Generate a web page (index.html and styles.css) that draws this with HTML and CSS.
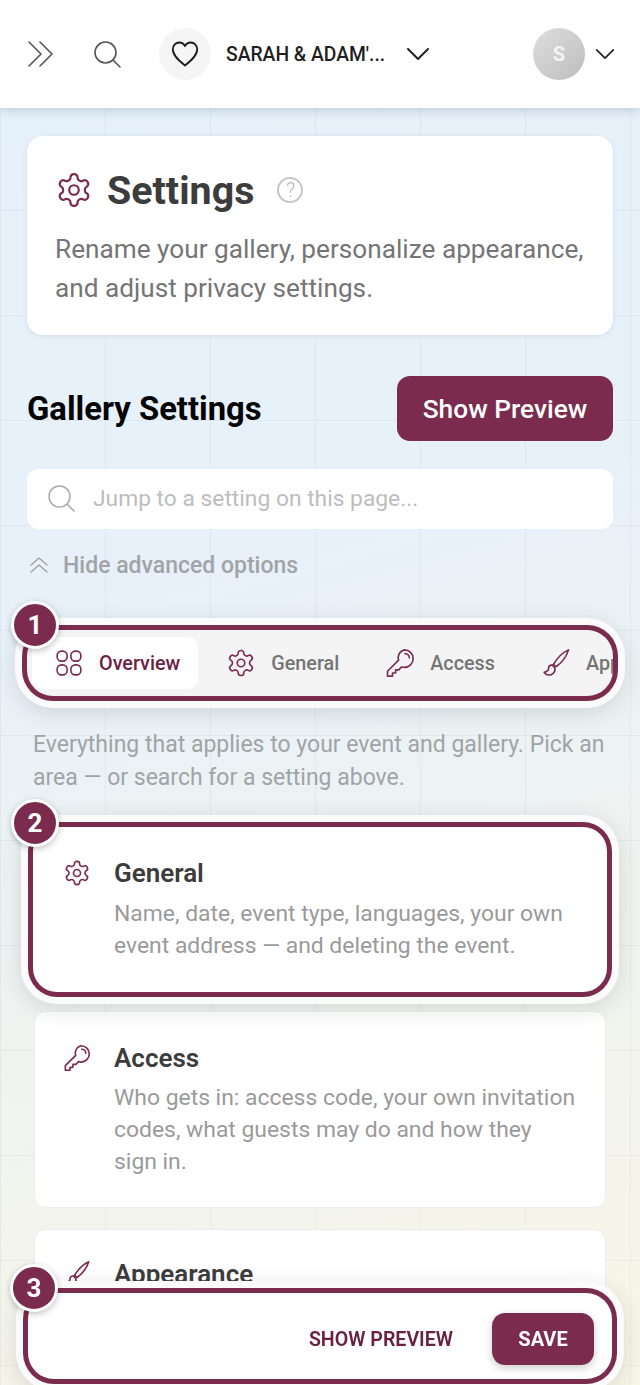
FILE: index.html
```html
<!DOCTYPE html>
<html lang="en">
<head>
<meta charset="UTF-8">
<meta name="viewport" content="width=device-width, initial-scale=1.0">
<title>Gallery Settings</title>
<link rel="stylesheet" href="styles.css">
</head>
<body>
<svg class="icon-defs" width="0" height="0">
  <defs>
    <symbol id="i-gear" viewBox="0 0 24 24">
      <path d="M12.22 2h-.44a2 2 0 0 0-2 2v.18a2 2 0 0 1-1 1.73l-.43.25a2 2 0 0 1-2 0l-.15-.08a2 2 0 0 0-2.73.73l-.22.38a2 2 0 0 0 .73 2.73l.15.1a2 2 0 0 1 1 1.72v.51a2 2 0 0 1-1 1.74l-.15.09a2 2 0 0 0-.73 2.73l.22.38a2 2 0 0 0 2.73.73l.15-.08a2 2 0 0 1 2 0l.43.25a2 2 0 0 1 1 1.73V20a2 2 0 0 0 2 2h.44a2 2 0 0 0 2-2v-.18a2 2 0 0 1 1-1.73l.43-.25a2 2 0 0 1 2 0l.15.08a2 2 0 0 0 2.73-.73l.22-.39a2 2 0 0 0-.73-2.73l-.15-.08a2 2 0 0 1-1-1.74v-.5a2 2 0 0 1 1-1.74l.15-.09a2 2 0 0 0 .73-2.73l-.22-.38a2 2 0 0 0-2.73-.73l-.15.08a2 2 0 0 1-2 0l-.43-.25a2 2 0 0 1-1-1.73V4a2 2 0 0 0-2-2z"/>
      <circle cx="12" cy="12" r="3"/>
    </symbol>
    <symbol id="i-key" viewBox="0 0 24 24">
      <path d="M15.5 1.500a7 7 0 0 1 0 14c-.8 0-1.500-.1-2.200-.4L11 17.500H8.500V20H6v2.500H2V18.600l8.900-8.900c-.3-.7-.4-1.400-.4-2.200a7 7 0 0 1 5-6z"/>
      <path d="M16 4.500a3.500 3.500 0 0 1 3.500 3.500"/>
    </symbol>
    <symbol id="i-brush" viewBox="0 0 24 24">
      <path d="M22 1.500c-4.500 2-9 6.500-12 11.500l2 2c5-3.500 8.500-8.500 10-13.500z"/>
      <path d="M9 13.500c-2 .2-3 1.500-3 3 0 1.200-1 2.200-3.500 3 1.500 2.500 5 2.700 7 1 1.300-1.100 2-2.700 1.500-4.500z"/>
    </symbol>
    <symbol id="i-grid" viewBox="0 0 24 24">
      <rect x="2.500" y="2.500" width="8" height="8" rx="3.500"/>
      <rect x="13.500" y="2.500" width="8" height="8" rx="3.500"/>
      <rect x="2.500" y="13.500" width="8" height="8" rx="3.500"/>
      <rect x="13.500" y="13.500" width="8" height="8" rx="3.500"/>
    </symbol>
    <symbol id="i-search" viewBox="0 0 28 28">
      <circle cx="12.500" cy="12.500" r="10.500"/>
      <path d="M20.500 20.500l6.500 6.500"/>
    </symbol>
    <symbol id="i-chevron" viewBox="0 0 24 14">
      <path d="M2 2l10 10L22 2"/>
    </symbol>
  </defs>
</svg>

<div class="topbar">
  <svg class="top-icon expand-icon" viewBox="0 0 26 26"><path d="M1 1l12 12L1 25"/><path d="M12 1l12 12-12 12"/></svg>
  <svg class="top-icon search-icon"><use href="#i-search"/></svg>
  <div class="event-logo">
    <svg class="heart-icon" viewBox="0 0 28 26"><path d="M14 24.500C9 20.500 1.800 15 1.800 8.300 1.800 4.400 4.800 1.500 8.300 1.500c2.400 0 4.500 1.200 5.700 3.500 1.200-2.300 3.300-3.500 5.700-3.500 3.500 0 6.500 2.900 6.500 6.800C26.200 15 19 20.500 14 24.500z"/></svg>
  </div>
  <div class="event-name">SARAH &amp; ADAM'...</div>
  <svg class="chevron event-chevron"><use href="#i-chevron"/></svg>
  <div class="avatar">S</div>
  <svg class="chevron user-chevron"><use href="#i-chevron"/></svg>
</div>

<div class="main-content">
  <div class="intro-card">
    <div class="intro-title">
      <svg class="intro-gear"><use href="#i-gear"/></svg>
      <h1>Settings</h1>
      <span class="help-mark">?</span>
    </div>
    <p>Rename your gallery, personalize appearance, and adjust privacy settings.</p>
  </div>

  <div class="section-head">
    <h2>Gallery Settings</h2>
    <button class="preview-button">Show Preview</button>
  </div>

  <div class="jump-search">
    <svg class="jump-icon"><use href="#i-search"/></svg>
    <span>Jump to a setting on this page...</span>
  </div>

  <div class="advanced-toggle">
    <svg class="advanced-icon" viewBox="0 0 20 18"><path d="M2 9l8-7 8 7"/><path d="M2 16l8-7 8 7"/></svg>
    <span>Hide advanced options</span>
  </div>

  <div class="tabs-wrap spotlight">
    <span class="badge">1</span>
    <div class="tabs">
      <div class="tab active"><svg class="tab-icon"><use href="#i-grid"/></svg>Overview</div>
      <div class="tab"><svg class="tab-icon"><use href="#i-gear"/></svg>General</div>
      <div class="tab"><svg class="tab-icon"><use href="#i-key"/></svg>Access</div>
      <div class="tab"><svg class="tab-icon"><use href="#i-brush"/></svg>Appearance</div>
    </div>
  </div>

  <p class="help-text">Everything that applies to your event and gallery. Pick an area — or search for a setting above.</p>

  <div class="area-list">
    <div class="area-card general-card spotlight">
      <span class="badge">2</span>
      <svg class="area-icon"><use href="#i-gear"/></svg>
      <div>
        <h3>General</h3>
        <p>Name, date, event type, languages, your own event address — and deleting the event.</p>
      </div>
    </div>
    <div class="area-card">
      <svg class="area-icon"><use href="#i-key"/></svg>
      <div>
        <h3>Access</h3>
        <p>Who gets in: access code, your own invitation codes, what guests may do and how they<br>sign in.</p>
      </div>
    </div>
    <div class="area-card appearance-card">
      <svg class="area-icon"><use href="#i-brush"/></svg>
      <div>
        <h3>Appearance</h3>
      </div>
    </div>
  </div>
</div>

<div class="save-bar spotlight">
  <span class="badge">3</span>
  <button class="text-button">SHOW PREVIEW</button>
  <button class="save-button">SAVE</button>
</div>
</body>
</html>
```

FILE: styles.css
```css
* {
  margin: 0;
  padding: 0;
  box-sizing: border-box;
}

body {
  height: 1385px;
  overflow: hidden;
  font-family: Roboto, sans-serif;
  background-color: #eaf2f8;
  background-image:
    linear-gradient(to right, rgba(90, 110, 120, 0.07) 1px, transparent 1px),
    linear-gradient(to bottom, rgba(90, 110, 120, 0.07) 1px, transparent 1px),
    linear-gradient(165deg, #e5f1fb 0%, #e8f1f9 40%, #eef3f2 62%, #f3f4ec 82%, #f8f6e6 100%);
  background-size: 105px 105px, 105px 105px, 100% 100%;
}

.icon-defs {
  position: absolute;
}

svg {
  fill: none;
  stroke: currentColor;
  stroke-linecap: round;
  stroke-linejoin: round;
  flex-shrink: 0;
}

button {
  border: none;
  font-family: Roboto, sans-serif;
}

/* Top bar */
.topbar {
  height: 108px;
  background-color: #fff;
  box-shadow: 0 2px 10px rgba(40, 60, 80, 0.22);
  display: flex;
  align-items: center;
  padding-left: 28px;
  position: relative;
}

.top-icon {
  color: #555;
}

.expand-icon {
  width: 26px;
  height: 26px;
  stroke-width: 1.6;
}

.search-icon {
  width: 28px;
  height: 28px;
  margin-left: 39px;
  stroke-width: 1.6;
}

.event-logo {
  width: 52px;
  height: 52px;
  margin-left: 38px;
  border-radius: 50%;
  background-color: #f5f5f5;
  display: flex;
  align-items: center;
  justify-content: center;
}

.heart-icon {
  width: 28px;
  height: 26px;
  color: #1d1d1d;
  stroke-width: 1.8;
}

.event-name {
  margin-left: 15px;
  width: 180px;
  font-size: 19.300px;
  font-weight: 500;
  color: #1f1f1f;
  white-space: nowrap;
}

.chevron {
  color: #222;
  stroke-width: 2;
}

.event-chevron {
  width: 24px;
  height: 14px;
}

.avatar {
  width: 52px;
  height: 52px;
  margin-left: 103px;
  border-radius: 50%;
  background: linear-gradient(135deg, #dedede, #bdbdbd);
  color: #f4f4f4;
  font-size: 20px;
  font-weight: 700;
  display: flex;
  align-items: center;
  justify-content: center;
}

.user-chevron {
  width: 20px;
  height: 12px;
  margin-left: 10px;
}

/* Main */
.main-content {
  padding: 28px 27px 0;
}

.intro-card {
  background-color: #fff;
  border-radius: 16px;
  height: 199px;
  padding: 32px 20px 0 28px;
  box-shadow: 0 1px 5px rgba(60, 80, 100, 0.12);
}

.intro-title {
  display: flex;
  align-items: center;
  height: 44px;
}

.intro-gear {
  width: 38px;
  height: 38px;
  color: #7b2c4e;
  stroke-width: 1.400;
}

.intro-title h1 {
  margin-left: 14px;
  font-size: 39.400px;
  font-weight: 700;
  color: #3c3c3c;
}

.help-mark {
  width: 26px;
  height: 26px;
  margin-left: 23px;
  border: 2px solid #c6c6c6;
  border-radius: 50%;
  color: #b4b4b4;
  font-size: 20px;
  font-weight: 300;
  line-height: 22px;
  text-align: center;
}

.intro-card p {
  margin-top: 18px;
  font-size: 26.200px;
  line-height: 39px;
  color: #757575;
}

.section-head {
  margin-top: 41px;
  display: flex;
  align-items: center;
  justify-content: space-between;
}

.section-head h2 {
  font-size: 32.800px;
  font-weight: 700;
  color: #050505;
}

.preview-button {
  width: 216px;
  height: 65px;
  border-radius: 13px;
  background-color: #7b2c4e;
  color: #fff;
  font-size: 26.300px;
  font-weight: 500;
}

.jump-search {
  margin-top: 28px;
  height: 60px;
  background-color: #fff;
  border-radius: 12px;
  display: flex;
  align-items: center;
  padding-left: 20px;
  padding-bottom: 2px;
  color: #bdbdbd;
  font-size: 22.800px;
}

.jump-icon {
  width: 28px;
  height: 28px;
  margin-right: 18px;
  color: #a9a9a9;
  stroke-width: 1.5;
}

.advanced-toggle {
  margin-top: 21px;
  height: 30px;
  display: flex;
  align-items: center;
  padding-left: 2px;
  color: #a0a4a7;
  font-size: 23px;
  font-weight: 500;
}

.advanced-icon {
  width: 20px;
  height: 18px;
  margin-right: 14px;
  stroke-width: 1.5;
}

/* Numbered highlight around a region */
.spotlight {
  position: relative;
  box-shadow:
    0 0 0 5px #7b2c4e,
    0 0 0 12px #fbfbfb,
    0 5px 22px 12px rgba(40, 50, 60, 0.14);
}

.badge {
  position: absolute;
  width: 48px;
  height: 48px;
  border: 3px solid #fff;
  border-radius: 50%;
  background-color: #7b2c4e;
  color: #fff;
  font-size: 26px;
  font-weight: 700;
  line-height: 42px;
  text-align: center;
  box-shadow: 0 2px 6px rgba(0, 0, 0, 0.25);
  z-index: 2;
}

.tabs-wrap {
  margin-top: 50px;
  height: 66px;
  border-radius: 26px;
  background-color: #f5f4f4;
}

.tabs-wrap .badge {
  left: -16px;
  top: -29px;
}

.tabs {
  height: 100%;
  padding: 7px 0 7px 5px;
  display: flex;
  gap: 6px;
  overflow: hidden;
  border-radius: 26px;
}

.tab {
  height: 52px;
  display: flex;
  align-items: center;
  padding-left: 22px;
  padding-right: 18px;
  gap: 15px;
  color: #757575;
  font-size: 19.800px;
  font-weight: 500;
  white-space: nowrap;
  flex-shrink: 0;
}

.tab.active {
  background-color: #fff;
  border-radius: 10px;
  color: #6d2143;
}

.tab-icon {
  width: 30px;
  height: 30px;
  color: #7b2c4e;
  stroke-width: 1.3;
}

.help-text {
  margin: 32px 6px 0;
  font-size: 23px;
  line-height: 33px;
  color: #a0a4a6;
}

.area-list {
  margin: 33px 7px 0;
  display: flex;
  flex-direction: column;
  gap: 21px;
}

.area-card {
  background-color: #fff;
  border: 1px solid #ededed;
  border-radius: 12px;
  padding: 29px 20px 29px 28px;
  display: flex;
  gap: 23px;
}

.appearance-card {
  padding-top: 27px;
}

.general-card {
  border: none;
  border-radius: 24px;
  margin: 0 -1px -2px;
  padding: 29px 21px 30px 30px;
}

.general-card .badge {
  left: -22px;
  top: -28px;
}

.area-icon {
  width: 28px;
  height: 28px;
  margin-top: 3px;
  color: #7b2c4e;
  stroke-width: 1.4;
}

.area-card h3 {
  font-size: 26px;
  font-weight: 600;
  line-height: 34px;
  color: #3c3c3c;
}

.area-card p {
  margin-top: 7px;
  font-size: 22.900px;
  line-height: 32px;
  color: #9a9a9a;
}

.general-card p {
  margin-top: 8px;
}

/* Sticky save bar */
.save-bar {
  position: fixed;
  left: 28px;
  right: 28px;
  bottom: 6px;
  height: 86px;
  background-color: #fff;
  border-radius: 26px;
  display: flex;
  align-items: center;
  justify-content: flex-end;
  padding-top: 6px;
  padding-right: 18px;
}

.save-bar .badge {
  left: -18px;
  top: -29px;
}

.text-button {
  background: none;
  color: #6a2040;
  font-size: 19.600px;
  font-weight: 600;
}

.save-button {
  width: 102px;
  height: 52px;
  margin-left: 39px;
  border-radius: 13px;
  background-color: #7b2c4e;
  color: #fff;
  font-size: 20px;
  font-weight: 700;
  box-shadow: 0 3px 8px rgba(0, 0, 0, 0.2);
}
```
